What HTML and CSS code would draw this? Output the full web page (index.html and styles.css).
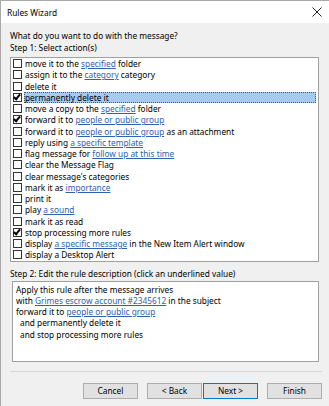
FILE: index.html
```html
<!DOCTYPE html>
<html lang="en">

<head>
    <meta charset="utf-8">
    <title>Rules Wizard</title>
    <link rel="stylesheet" href="styles.css">
</head>

<body>

    <div class="dialog">
        <div class="titlebar">
            <span class="title">Rules Wizard</span>
            <svg class="close" width="10" height="10" viewBox="0 0 10 10">
                <path d="M0.5 0.5L9.5 9.5M9.5 0.5L0.5 9.5" />
            </svg>
        </div>

        <div class="content">
            <p class="line">What do you want to do with the message?</p>
            <p class="line">Step 1: Select action(s)</p>

            <ul class="actions">
                <li><span class="box"></span><span class="text">move it to the <a>specified</a> folder</span></li>
                <li><span class="box"></span><span class="text">assign it to the <a>category</a> category</span></li>
                <li><span class="box"></span><span class="text">delete it</span></li>
                <li class="selected"><span class="box checked"></span><span class="text">permanently delete it</span></li>
                <li><span class="box"></span><span class="text">move a copy to the <a>specified</a> folder</span></li>
                <li><span class="box checked"></span><span class="text">forward it to <a>people or public group</a></span></li>
                <li><span class="box"></span><span class="text">forward it to <a>people or public group</a> as an attachment</span></li>
                <li><span class="box"></span><span class="text">reply using <a>a specific template</a></span></li>
                <li><span class="box"></span><span class="text">flag message for <a>follow up at this time</a></span></li>
                <li><span class="box"></span><span class="text">clear the Message Flag</span></li>
                <li><span class="box"></span><span class="text">clear message's categories</span></li>
                <li><span class="box"></span><span class="text">mark it as <a>importance</a></span></li>
                <li><span class="box"></span><span class="text">print it</span></li>
                <li><span class="box"></span><span class="text">play <a>a sound</a></span></li>
                <li><span class="box"></span><span class="text">mark it as read</span></li>
                <li><span class="box checked"></span><span class="text">stop processing more rules</span></li>
                <li><span class="box"></span><span class="text">display <a>a specific message</a> in the New Item Alert window</span></li>
                <li><span class="box"></span><span class="text">display a Desktop Alert</span></li>
            </ul>

            <p class="line step2">Step 2: Edit the rule description (click an underlined value)</p>

            <div class="desc">
                <p>Apply this rule after the message arrives</p>
                <p>with <a>Grimes escrow account #2345612</a> in the subject</p>
                <p>forward it to <a>people or public group</a></p>
                <p class="indent">and permanently delete it</p>
                <p class="indent">and stop processing more rules</p>
            </div>

            <div class="sep"></div>

            <div class="buttons">
                <button>Cancel</button>
                <button class="back">&lt; Back</button>
                <button class="next">Next &gt;</button>
                <button class="finish">Finish</button>
            </div>
        </div>
    </div>

</body>

</html>
```

FILE: styles.css
```css
body {
    margin: 0;
    font-family: 'Noto Sans', sans-serif;
    font-size: 8.3px;
    color: #000;
}

p {
    margin: 0;
}

.dialog {
    width: 329px;
    height: 406px;
    box-sizing: border-box;
    border-left: 1px solid #a9a9a9;
    border-top: 1px solid #a9a9a9;
    background: #f0f0f0;
}

.titlebar {
    height: 22px;
    background: #fff;
    display: flex;
    align-items: center;
    justify-content: space-between;
    padding: 0 7px 0 6px;
}

.close {
    stroke: #222;
    stroke-width: 1;
    fill: none;
}

.content {
    padding: 7px 7px 0 9px;
}

.line {
    line-height: 12px;
}

.actions {
    list-style: none;
    margin: 3px 3px 0 0;
    padding: 0;
    background: #fff;
    border: 1px solid #a0a0a0;
}

.actions li {
    height: 11.25px;
    display: flex;
    align-items: center;
}

.box {
    width: 7px;
    height: 7px;
    border: 1px solid #333;
    background: #fff;
    margin: 0 2px 0 2px;
    position: relative;
}

.box.checked::after {
    content: "";
    position: absolute;
    left: 1px;
    top: -1px;
    width: 2px;
    height: 5px;
    border-right: 2px solid #000;
    border-bottom: 2px solid #000;
    transform: rotate(40deg);
}

.text {
    flex: 1;
    padding: 0;
    margin-right: 2px;
    line-height: 9px;
    height: 9px;
    border: 1px solid transparent;
    white-space: nowrap;
}

.selected .text {
    background: #a6caf0;
    border: 1px dotted #555;
}

a {
    color: #2f62ad;
    text-decoration: underline;
}

.step2 {
    margin-top: 6px;
}

.desc {
    margin: 1px 3px 0 2px;
    background: #fff;
    border: 1px solid #a0a0a0;
    padding: 2px 3px;
    box-sizing: border-box;
    height: 81px;
}

.desc p {
    line-height: 11.25px;
}

.desc .indent {
    padding-left: 4px;
}

.sep {
    margin-top: 9px;
    border-top: 1px solid #d6d6d6;
}

.buttons {
    margin-top: 11px;
    display: flex;
    justify-content: flex-end;
    gap: 9px;
}

.buttons button {
    width: 55px;
    height: 16px;
    padding: 0;
    font-family: 'Noto Sans', sans-serif;
    font-size: 8.3px;
    color: #000;
    background: #e1e1e1;
    border: 1px solid #adadad;
    border-radius: 0;
}

.buttons .back {
    margin-right: -8px;
}

.buttons .next {
    border-color: #0078d7;
}
```
